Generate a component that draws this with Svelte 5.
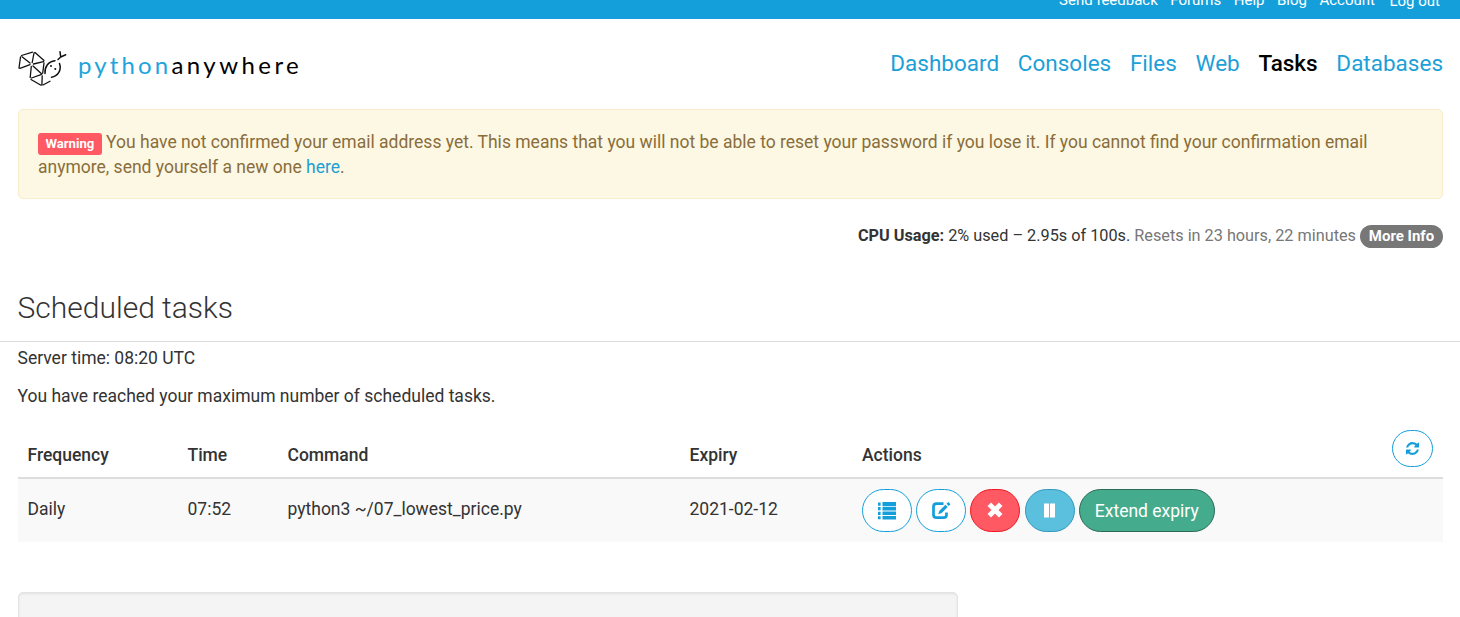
<script>
  const account = ['Send feedback', 'Forums', 'Help', 'Blog', 'Account', 'Log out'];
  const nav = ['Dashboard', 'Consoles', 'Files', 'Web', 'Tasks', 'Databases'];
  const current = 'Tasks';
</script>

<div class="page">
  <div class="topbar">
    {#each account as item}<a href="#top" class:logout={item === 'Log out'}>{item}</a>{/each}
  </div>

  <header>
    <div class="logo">
      <svg width="52" height="40" viewBox="0 0 52 40" fill="none" stroke="#111" stroke-width="1.3" stroke-linecap="round">
        <path d="M4.500 7.500L15.500 4.200M3.500 9L2 20M5 8.800L13 15M17 5L15.200 14.500M18 4.500L27 12.500M3 20.300L13 16.600M16.500 16L26.500 13.600M14.300 18.500L13.200 29.500M16 18L24.800 26M27 15L25.700 25M14.500 30L24 26.700M14 31.500L24 37.200M25.200 28L24.900 36.500M26 37L33 33.300"/>
        <path d="M28 26C27.500 19.500 31 14 38 13.200M42.500 16C45 23 40.500 29 34.500 29.700M41 12L43.700 9.500M43.700 9.500L43 4.200M43.700 9.500L48.700 7.300" stroke-width="1.500" transform="translate(0 -.5)"/>
        <circle cx="34" cy="18" r="1" fill="#111" stroke="none"/>
        <circle cx="38.300" cy="21" r="1" fill="#111" stroke="none"/>
      </svg>
      <span class="word"><span class="python">python</span><span class="anywhere">anywhere</span></span>
    </div>
    <nav>
      {#each nav as item}<a href="#top" class:active={item === current}>{item}</a>{/each}
    </nav>
  </header>

  <div class="alert"><span class="label">Warning</span> You have not confirmed your email address yet. This means that you will not be able to reset your password if you lose it. If you cannot find your confirmation email anymore, send yourself a new one <a href="#top">here</a>.</div>

  <div class="cpu"><b>CPU Usage:</b> 2% used – 2.95s of 100s. <span class="muted">Resets in 23 hours, 22 minutes</span> <span class="badge">More Info</span></div>

  <h1>Scheduled tasks</h1>

  <main>
    <p>Server time: 08:20 UTC</p>
    <p>You have reached your maximum number of scheduled tasks.</p>

    <div class="row head">
      <span>Frequency</span><span>Time</span><span>Command</span><span>Expiry</span><span>Actions</span>
      <button class="refresh" aria-label="Refresh">
        <svg width="13" height="13" viewBox="0 0 1536 1536" fill="currentColor"><path d="M1511 928q0 5-1 7-64 268-268 434.500T764 1536q-146 0-282.500-55T238 1324l-129 129q-19 19-45 19t-45-19-19-45V960q0-26 19-45t45-19h448q26 0 45 19t19 45-19 45l-137 137q71 66 161 102t187 36q134 0 250-65t186-179q11-17 53-117 8-23 30-23h192q13 0 22.500 9.500t9.500 22.500zm25-800v448q0 26-19 45t-45 19h-448q-26 0-45-19t-19-45 19-45l138-138Q969 256 768 256q-134 0-250 65T332 500q-11 17-53 117-8 23-30 23H50q-13 0-22.500-9.500T18 608v-7q65-268 270-434.500T768 0q146 0 284 55.500T1297 212l130-129q19-19 45-19t45 19 19 45z"/></svg>
      </button>
    </div>
    <div class="row task">
      <span>Daily</span><span>07:52</span><span>python3 ~/07_lowest_price.py</span><span>2021-02-12</span>
      <div class="actions">
        <button class="outline" aria-label="Log">
          <svg width="20" height="20" viewBox="0 0 20 20" fill="currentColor"><path d="M1 1.500h2.600v3.200H1zM5.500 1h13.500v4H5.500zM1 6h2.600v3.200H1zM5.500 5.800h13.500v3.600H5.500zM1 10.800h2.600V14H1zM5.500 10.400h13.500v3.700H5.500zM1 15.300h2.600v3H1zM5.500 15h13.500v3.600H5.500z"/></svg>
        </button>
        <button class="outline" aria-label="Edit">
          <svg width="20" height="20" viewBox="0 0 20 20"><path d="M12.500 2.700H5.500Q2.500 2.700 2.500 5.700v8q0 3 3 3H12.500q3 0 3-3V11.500" fill="none" stroke="currentColor" stroke-width="2.700"/><path d="M14.500 3.800l2.200 2.200-6 6-3.500 1.200 1.200-3.500zM15.500 2.800L17.300 1l2.200 2.200L17.700 5z" fill="currentColor"/></svg>
        </button>
        <button class="danger" aria-label="Delete">
          <svg width="20" height="20" viewBox="0 0 20 20"><path d="M4.300 3.300l11.400 11.400M15.700 3.300L4.300 14.700" fill="none" stroke="currentColor" stroke-width="5"/></svg>
        </button>
        <button class="info" aria-label="Pause">
          <svg width="20" height="20" viewBox="0 0 20 20" fill="currentColor"><path d="M4 2.500h5v14H4zM10 2.500h5v14h-5z"/></svg>
        </button>
        <button class="success">Extend expiry</button>
      </div>
    </div>
    <div class="well"></div>
  </main>
</div>

<style>
  :global(body) { background: #fff; overflow: hidden; }
  .page { height: 617px; overflow: hidden; font: 17.500px/25px Roboto, sans-serif; color: #333; }
  a { color: #1d9fd7; text-decoration: none; }
  .topbar { box-sizing: border-box; height: 19px; background: #149fda; display: flex; justify-content: flex-end; align-items: flex-end; gap: 12.500px; padding: 0 20px 9px 0; font-size: 15px; line-height: 20px; }
  .topbar a { color: #fff; }
  .topbar .logout { margin: 0 0 -1px 2px; }
  header { height: 90px; display: flex; justify-content: space-between; padding: 0 17px; }
  .logo { display: flex; padding-top: 29px; }
  .word { margin: -1px 0 0 9px; font: 24px/36px Lato, sans-serif; white-space: nowrap; }
  .python { color: #1fa4dc; letter-spacing: 3.150px; }
  .anywhere { color: #000; letter-spacing: 3.450px; }
  nav { display: flex; gap: 18.700px; padding-top: 28px; font-size: 22.500px; line-height: 32px; }
  nav .active { color: #000; font-weight: 500; }
  .alert { box-sizing: border-box; height: 90px; margin: 0 17px 0 18px; padding: 20px 19px 18px; border: 1px solid #faebcc; border-radius: 5px; background: #fcf8e3; color: #8a6d3b; }
  .label { display: inline-block; box-sizing: border-box; height: 22px; padding: 0 7.500px; border-radius: 3px; background: #ff5964; color: #fff; font-weight: 700; font-size: 13.125px; line-height: 21px; vertical-align: 0; margin-bottom: -4px; }
  .cpu { height: 50px; margin-top: 24px; padding-right: 17px; text-align: right; font-size: 16.250px; line-height: 25px; }
  .muted { color: #777; }
  .badge { display: inline-block; box-sizing: border-box; height: 23px; padding: 0 8.800px; border-radius: 12px; background: #777; color: #fff; font-weight: 700; font-size: 15px; line-height: 23px; }
  h1 { box-sizing: border-box; height: 69px; margin: 0; padding: 15px 17.500px 0; border-bottom: 1px solid #ddd; font-size: 30px; line-height: 40px; font-weight: 300; }
  main { padding: 4px 17px 0 18px; }
  p { margin: 0 0 13px -.5px; }
  .row { display: grid; grid-template-columns: 160px 100px 402px 172.500px 1fr auto; box-sizing: border-box; padding: 0 10px 0 9.500px; }
  .head { height: 60px; margin-top: -3px; border-bottom: 2px solid #ddd; font-weight: 500; }
  .head span { padding-top: 24px; }
  .task { height: 63px; background: #f9f9f9; }
  .task > span { padding-top: 18px; }
  .actions { display: flex; gap: 4.200px; padding-top: 10px; }
  button { box-sizing: border-box; display: flex; align-items: center; justify-content: center; width: 50px; height: 43px; padding: 0; border: 1px solid; border-radius: 22px; font: inherit; flex: none; }
  .outline, .refresh { background: #fff; color: #149fda; border-color: #149fda; }
  .refresh { width: 41px; height: 37px; margin-top: 11px; border-radius: 19px; }
  .danger { color: #fff; background: #ff5964; border-color: #f01722; }
  .info { color: #fff; background: #5bc0de; border-color: #3198bd; }
  .success { width: 136px; padding-top: 1px; color: #fff; background: #44ac8c; border-color: #2b6a57; }
  .well { box-sizing: border-box; width: 940px; height: 100px; margin-top: 50px; border: 1px solid #e3e3e3; border-radius: 5px; background: #f4f4f4; box-shadow: inset 0 1px 2px rgba(0,0,0,.08); }
</style>
